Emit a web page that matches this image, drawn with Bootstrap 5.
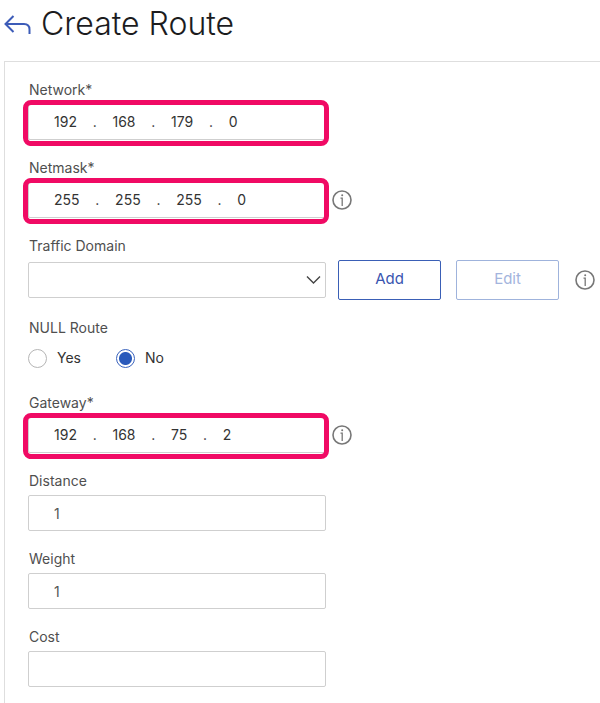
<!DOCTYPE html>
<html lang="en">
<head>
<meta charset="utf-8">
<meta name="viewport" content="width=device-width, initial-scale=1">
<title>Create Route</title>
<link href="https://cdn.jsdelivr.net/npm/bootstrap@5.3.0/dist/css/bootstrap.min.css" rel="stylesheet">
<style>
  body { font-family: Inter, "Liberation Sans", sans-serif; font-size: 14px; line-height: 20px; color: #333; background: #fff; }
  .page-title { font-size: 32px; line-height: 40px; font-weight: 300; color: #1c1c1e; }
  .title-bar { padding: 4px 4px 17px; gap: 10px; }
  .back-link, .info-btn { line-height: 0; }
  .info-btn { color: #777; }
  .panel { margin-left: 4px; padding: 18px 4px 16px 23px; border-top: 1px solid #dedede; border-left: 1px solid #dedede; }
  .field { margin-bottom: 18px; }
  .field-label { display: block; margin-bottom: 4px; padding: 0 1px; color: #4f4f4f; font-size: 14px; line-height: 20px; float: none; }
  .field-box { flex: 0 1 298px; min-width: 0; position: relative; }
  .form-control, .form-select { height: 36px; padding: 0 25px; border: 1px solid #cfcfcf; border-radius: 2px; font-size: 14px; line-height: 20px; color: #333; background-color: #fff; }
  .marked .form-control { padding-bottom: 1px; }
  .form-select { background-image: none; }
  .chevron { position: absolute; right: 5px; top: 12px; pointer-events: none; }
  .marked::after { content: ""; position: absolute; inset: -4px -3px -6px -5px; border: 5px solid #f00a64; border-radius: 8px; pointer-events: none; }
  .form-control.plain { color: #555; }
  .action { flex: 0 1 103px; height: 40px; padding: 0 0 2px; border: 1px solid #3a5fb6; border-radius: 2px; font-size: 15px; color: #3a55b0; }
  .action:disabled { border-color: #9fb3dc; color: #a3b4dd; opacity: 1; }
  .radio-row { margin-top: 10px; margin-bottom: 25px; gap: 35px; }
  .choice { gap: 10px; }
  .choice .form-check-input { width: 19px; height: 19px; margin: 0; border: 1px solid #b5b5b5; background: #fff; }
  .choice .form-check-input:checked { border-color: #3a63bd; background: radial-gradient(circle, #2a5abb 0 6px, #fff 7px); }
  .gap-info { gap: 6px; }
  .domain-row { gap: 12px; }
  .button-pair { flex: 0 1 221px; gap: 15px; margin-right: 4px; }
</style>
<script src="https://cdn.jsdelivr.net/npm/bootstrap@5.3.0/dist/js/bootstrap.bundle.min.js"></script>
</head>
<body>
<svg class="d-none" xmlns="http://www.w3.org/2000/svg">
  <symbol id="info" viewBox="0 0 20 20">
    <circle cx="10" cy="10" r="9" fill="none" stroke="currentColor" stroke-width="1.6"/>
    <path d="M8.500 8.200h1.700V16" fill="none" stroke="currentColor" stroke-width="1.300"/>
    <circle cx="10.200" cy="5.300" r="1" fill="currentColor"/>
  </symbol>
</svg>
<div class="d-flex flex-column min-vh-100">
  <header class="title-bar d-flex align-items-center">
    <a class="back-link" href="#" aria-label="Back">
      <svg width="27" height="20" viewBox="0 0 27 20" fill="none" stroke="#3d5cb8" stroke-width="2"><path d="M9.500 2 1.500 10l8 8M1.500 10H20q5.500 0 5.500 5.500V20"/></svg>
    </a>
    <h1 class="page-title m-0">Create Route</h1>
  </header>
  <main class="panel flex-grow-1">
    <form>
      <div class="field">
        <label class="field-label" for="network">Network*</label>
        <div class="d-flex align-items-center gap-info">
          <div class="field-box marked"><input class="form-control" id="network" type="text" value="192    .    168    .    179    .    0"></div>
        </div>
      </div>
      <div class="field">
        <label class="field-label" for="netmask">Netmask*</label>
        <div class="d-flex align-items-center gap-info">
          <div class="field-box marked"><input class="form-control" id="netmask" type="text" value="255    .    255    .    255    .    0"></div>
          <button class="info-btn btn p-0 border-0" type="button" aria-label="Netmask help"><svg width="20" height="20"><use href="#info"/></svg></button>
        </div>
      </div>
      <div class="field">
        <label class="field-label" for="domain">Traffic Domain</label>
        <div class="domain-row d-flex align-items-center">
          <div class="field-box">
            <select class="form-select" id="domain"><option></option></select>
            <svg class="chevron" width="15" height="12" viewBox="0 0 15 12" fill="none" stroke="#444" stroke-width="1.4"><path d="m1 2.500 6.500 6.500L14 2.500"/></svg>
          </div>
          <div class="button-pair d-flex">
            <button class="action btn" type="button">Add</button>
            <button class="action btn" type="button" disabled>Edit</button>
          </div>
          <button class="info-btn btn p-0 border-0" type="button" aria-label="Traffic domain help"><svg width="20" height="20"><use href="#info"/></svg></button>
        </div>
      </div>
      <fieldset>
        <legend class="field-label m-0">NULL Route</legend>
        <div class="radio-row d-flex">
          <div class="choice d-flex align-items-center"><input class="form-check-input" type="radio" name="nullroute" id="yes"><label for="yes">Yes</label></div>
          <div class="choice d-flex align-items-center"><input class="form-check-input" type="radio" name="nullroute" id="no" checked><label for="no">No</label></div>
        </div>
      </fieldset>
      <div class="field">
        <label class="field-label" for="gateway">Gateway*</label>
        <div class="d-flex align-items-center gap-info">
          <div class="field-box marked"><input class="form-control" id="gateway" type="text" value="192    .    168    .    75    .    2"></div>
          <button class="info-btn btn p-0 border-0" type="button" aria-label="Gateway help"><svg width="20" height="20"><use href="#info"/></svg></button>
        </div>
      </div>
      <div class="field">
        <label class="field-label" for="distance">Distance</label>
        <div class="d-flex"><div class="field-box"><input class="form-control plain" id="distance" type="text" value="1"></div></div>
      </div>
      <div class="field">
        <label class="field-label" for="weight">Weight</label>
        <div class="d-flex"><div class="field-box"><input class="form-control plain" id="weight" type="text" value="1"></div></div>
      </div>
      <div>
        <label class="field-label" for="cost">Cost</label>
        <div class="d-flex"><div class="field-box"><input class="form-control plain" id="cost" type="text"></div></div>
      </div>
    </form>
  </main>
</div>
</body>
</html>
